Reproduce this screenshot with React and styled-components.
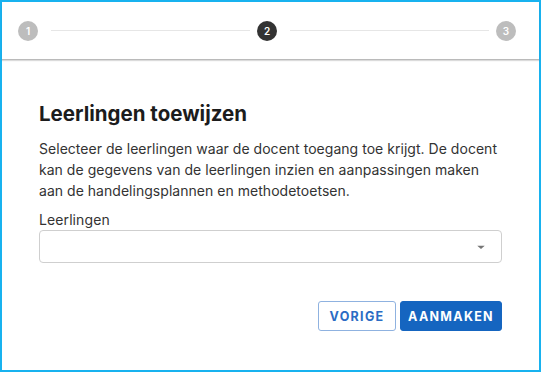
import React from "react";
import styled, { createGlobalStyle } from "styled-components";

const GlobalStyle = createGlobalStyle`
  html, body {
    margin: 0;
    padding: 0;
    background: #ffffff;
  }
  body {
    font-family: Inter, "DejaVu Sans", sans-serif;
    color: #212121;
  }
  * {
    box-sizing: border-box;
  }
`;

const steps = [1, 2, 3];
const activeStep = 2;

export default function App() {
  return (
    <>
      <GlobalStyle />
      <Frame>
        <Stepper>
          {steps.map((step, i) => (
            <React.Fragment key={step}>
              {i > 0 && <Connector />}
              <StepCircle active={step === activeStep}>{step}</StepCircle>
            </React.Fragment>
          ))}
        </Stepper>
        <Body>
          <Title>Leerlingen toewijzen</Title>
          <Description>
            Selecteer de leerlingen waar de docent toegang toe krijgt. De docent
            kan de gegevens van de leerlingen inzien en aanpassingen maken aan
            de handelingsplannen en methodetoetsen.
          </Description>
          <Label>Leerlingen</Label>
          <Select>
            <svg width="20" height="20" viewBox="0 0 24 24">
              <path d="M7.5 10.5l4.5 4 4.5-4z" fill="#757575" />
            </svg>
          </Select>
          <Actions>
            <OutlineButton>Vorige</OutlineButton>
            <PrimaryButton>Aanmaken</PrimaryButton>
          </Actions>
        </Body>
      </Frame>
    </>
  );
}

const Frame = styled.div`
  width: 541px;
  height: 372px;
  border: 2px solid #18b2ef;
  background: #fff;
  display: flex;
  flex-direction: column;
`;

const Stepper = styled.div`
  height: 58px;
  display: flex;
  align-items: center;
  padding: 0 23px 0 16px;
  border-bottom: 1px solid #bababa;
  box-shadow: 0 1px 1px rgba(0, 0, 0, 0.14);
`;

const StepCircle = styled.div`
  width: 20px;
  height: 20px;
  border-radius: 50%;
  flex-shrink: 0;
  display: flex;
  align-items: center;
  justify-content: center;
  font-size: 10px;
  font-weight: 600;
  color: #fff;
  background: ${(p) => (p.active ? "#333333" : "#bdbdbd")};
`;

const Connector = styled.div`
  flex: 1;
  height: 1px;
  background: #e6e6e6;
  margin: 0 7px 0 13px;
`;

const Body = styled.div`
  padding: 41px 37px 0 37px;
  display: flex;
  flex-direction: column;
`;

const Title = styled.h2`
  margin: 0 0 11px;
  font-size: 20.5px;
  line-height: 26px;
  font-weight: 700;
  color: #1c1c1c;
`;

const Description = styled.p`
  margin: 0;
  font-size: 14px;
  letter-spacing: 0.03px;
  line-height: 21px;
  color: #333;
`;

const Label = styled.div`
  margin-top: 10px;
  font-size: 14px;
  letter-spacing: 0.1px;
  line-height: 18px;
  color: #333;
`;

const Select = styled.div`
  margin-top: 1px;
  height: 33px;
  border: 1px solid #cfcfcf;
  border-radius: 4px;
  display: flex;
  align-items: center;
  justify-content: flex-end;
  padding-right: 10px;
`;

const Actions = styled.div`
  margin-top: 38px;
  display: flex;
  justify-content: flex-end;
  gap: 4px;
`;

const BaseButton = styled.button`
  height: 30px;
  border-radius: 3px;
  font-family: inherit;
  font-size: 12.5px;
  font-weight: 700;
  letter-spacing: 1.3px;
  text-transform: uppercase;
  cursor: pointer;
`;

const OutlineButton = styled(BaseButton)`
  width: 78px;
  background: #fff;
  color: #2a6cc4;
  border: 1px solid #8fb2e0;
`;

const PrimaryButton = styled(BaseButton)`
  width: 102px;
  background: #1565c0;
  color: #fff;
  border: 1px solid #1565c0;
`;
